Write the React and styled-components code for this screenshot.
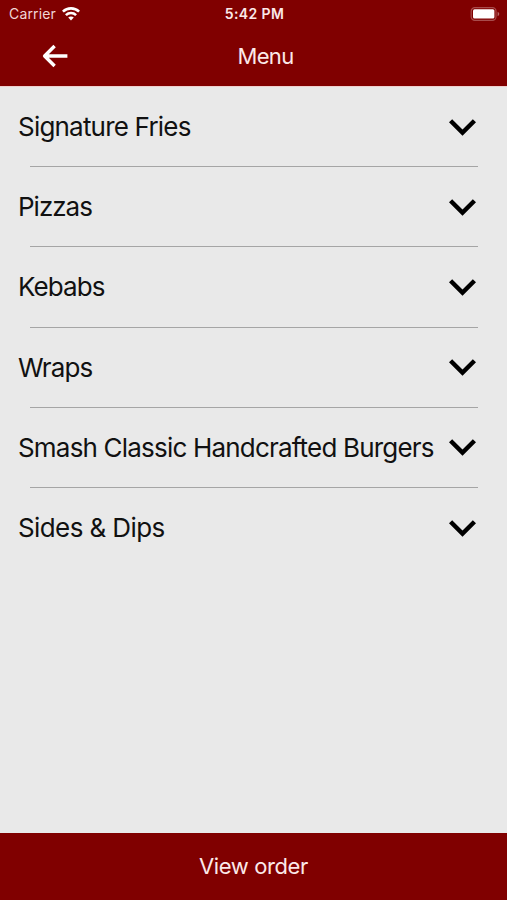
import React from 'react';
import styled, { createGlobalStyle } from 'styled-components';

const GlobalStyle = createGlobalStyle`
  * {
    box-sizing: border-box;
  }
  body {
    margin: 0;
    background: #e9e9e9;
    font-family: Inter, "Liberation Sans", sans-serif;
  }
`;

const Screen = styled.div`
  display: flex;
  flex-direction: column;
  width: 100%;
  height: 100vh;
  overflow: hidden;
`;

const Header = styled.header`
  height: 87px;
  flex-shrink: 0;
  background: #800000;
  color: #fbe9e9;
  border-bottom: 1px solid #f0d0ce;
`;

const StatusBar = styled.div`
  display: grid;
  grid-template-columns: 1fr auto 1fr;
  align-items: center;
  height: 27px;
  padding: 0 7px 0 9px;
`;

const Carrier = styled.div`
  display: flex;
  align-items: center;
  gap: 6px;
  font-size: 14px;
  letter-spacing: 0.15px;
  color: #f0d6d6;
`;

const Clock = styled.div`
  font-size: 14px;
  font-weight: 600;
  letter-spacing: 0.4px;
`;

const BatteryIcon = styled.svg`
  justify-self: end;
`;

const NavBar = styled.div`
  display: grid;
  grid-template-columns: 1fr auto 1fr;
  align-items: center;
  height: 58px;
  padding: 0 18px 0 42px;
`;

const BackButton = styled.button`
  display: flex;
  width: 27px;
  padding: 0;
  border: 0;
  background: none;
  color: #fff;
`;

const Title = styled.h1`
  margin: 0;
  font-size: 22px;
  font-weight: 400;
  letter-spacing: -0.7px;
`;

const List = styled.main`
  flex: 1;
`;

const Row = styled.div`
  display: flex;
  align-items: center;
  justify-content: space-between;
  height: 79.2px;
  padding: 1px 31px 0 18px;
`;

const Label = styled.span`
  margin-top: -1px;
  font-size: 26px;
  letter-spacing: ${props => props.$spacing}px;
  color: #111;
  white-space: nowrap;
`;

const Divider = styled.hr`
  height: 1px;
  margin: 0 29px 0 30px;
  border: 0;
  background: #a5a5a5;
`;

const Footer = styled.button`
  height: 67px;
  flex-shrink: 0;
  padding: 0 0 1px;
  border: 0;
  background: #800000;
  color: #fbe9e9;
  font-family: inherit;
  font-size: 22px;
  letter-spacing: -0.4px;
`;

const categories = [
  { name: 'Signature Fries', spacing: -0.8 },
  { name: 'Pizzas', spacing: -1 },
  { name: 'Kebabs', spacing: -0.9 },
  { name: 'Wraps', spacing: -0.9 },
  { name: 'Smash Classic Handcrafted Burgers', spacing: -0.81 },
  { name: 'Sides & Dips', spacing: -0.6 },
];

function Wifi() {
  return (
    <svg width="18" height="14" viewBox="0 0 18 14" fill="none" stroke="#fff" strokeWidth="2.6">
      <path d="M0.9 4.7C5.4 0.2 12.6 0.2 17.1 4.7" />
      <path d="M3.9 8.1C6.8 5.3 11.2 5.3 14.1 8.1" />
      <path d="M9 13.4L6.2 10.5C7.8 9 10.2 9 11.8 10.5Z" fill="#fff" stroke="none" />
    </svg>
  );
}

function Battery() {
  return (
    <BatteryIcon width="30" height="14" viewBox="0 0 30 14">
      <rect x="1.2" y="0.7" width="24.8" height="12.6" rx="3.6" fill="none" stroke="#a84c4c" strokeWidth="1.2" />
      <rect x="3" y="2.2" width="21.4" height="9.2" rx="1.5" fill="#fff" />
      <path d="M27.6 4.8C29.8 5.6 29.8 8.4 27.6 9.2Z" fill="#b66a6a" />
    </BatteryIcon>
  );
}

function Arrow() {
  return (
    <svg width="27" height="26" viewBox="0 0 27 26" fill="none" stroke="currentColor" strokeWidth="3.4">
      <path d="M25.4 13H3M12.6 3L2.6 13L12.6 23" strokeLinejoin="round" />
    </svg>
  );
}

function Chevron() {
  return (
    <svg width="27" height="17" viewBox="6 8.59 12 7.41">
      <path d="M7.41 8.59L12 13.17l4.59-4.58L18 10l-6 6-6-6z" />
    </svg>
  );
}

function App() {
  return (
    <>
      <GlobalStyle />
      <Screen>
        <Header>
          <StatusBar>
            <Carrier>
              Carrier
              <Wifi />
            </Carrier>
            <Clock>5:42 PM</Clock>
            <Battery />
          </StatusBar>
          <NavBar>
            <BackButton aria-label="Back">
              <Arrow />
            </BackButton>
            <Title>Menu</Title>
          </NavBar>
        </Header>
        <List>
          {categories.map((category, index) => (
            <React.Fragment key={category.name}>
              {index > 0 && <Divider />}
              <Row>
                <Label $spacing={category.spacing}>{category.name}</Label>
                <Chevron />
              </Row>
            </React.Fragment>
          ))}
        </List>
        <Footer>View order</Footer>
      </Screen>
    </>
  );
}

export default App;
